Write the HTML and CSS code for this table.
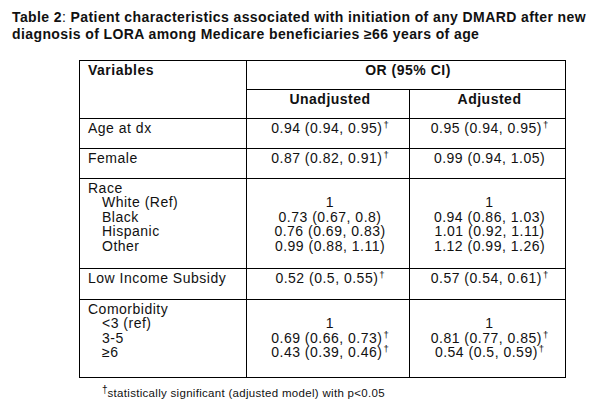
FILE: index.html
```html
<!DOCTYPE html>
<html>
<head>
<meta charset="utf-8">
<link rel="stylesheet" href="styles.css">
</head>
<body>
<div class="page">
  <h1 class="title">Table 2<span class="colon">:</span> Patient characteristics associated with initiation of any DMARD after new diagnosis of LORA among Medicare beneficiaries ≥66 years of age</h1>
  <table class="tbl">
    <colgroup>
      <col class="c1"><col class="c2"><col class="c3">
    </colgroup>
    <tr class="r-h1">
      <th class="left" rowspan="2">Variables</th>
      <th colspan="2">OR (95% CI)</th>
    </tr>
    <tr class="r-h2">
      <th>Unadjusted</th>
      <th>Adjusted</th>
    </tr>
    <tr class="r-1">
      <td class="left">Age at dx</td>
      <td>0.94 (0.94, 0.95)<sup>†</sup></td>
      <td>0.95 (0.94, 0.95)<sup>†</sup></td>
    </tr>
    <tr class="r-1">
      <td class="left">Female</td>
      <td>0.87 (0.82, 0.91)<sup>†</sup></td>
      <td>0.99 (0.94, 1.05)</td>
    </tr>
    <tr class="r-race">
      <td class="left">Race<br><span class="ind">White (Ref)</span><br><span class="ind">Black</span><br><span class="ind">Hispanic</span><br><span class="ind">Other</span></td>
      <td><br>1<br>0.73 (0.67, 0.8)<br>0.76 (0.69, 0.83)<br>0.99 (0.88, 1.11)</td>
      <td><br>1<br>0.94 (0.86, 1.03)<br>1.01 (0.92, 1.11)<br>1.12 (0.99, 1.26)</td>
    </tr>
    <tr class="r-1 r-lis">
      <td class="left">Low Income Subsidy</td>
      <td>0.52 (0.5, 0.55)<sup>†</sup></td>
      <td>0.57 (0.54, 0.61)<sup>†</sup></td>
    </tr>
    <tr class="r-com">
      <td class="left">Comorbidity<br><span class="ind">&lt;3 (ref)</span><br><span class="ind">3-5</span><br><span class="ind">≥6</span></td>
      <td><br>1<br>0.69 (0.66, 0.73)<sup>†</sup><br>0.43 (0.39, 0.46)<sup>†</sup></td>
      <td><br>1<br>0.81 (0.77, 0.85)<sup>†</sup><br>0.54 (0.5, 0.59)<sup>†</sup></td>
    </tr>
  </table>
  <p class="note"><sup>†</sup>statistically significant (adjusted model) with p&lt;0.05</p>
</div>
</body>
</html>
```

FILE: styles.css
```css
html, body {
  margin: 0;
  padding: 0;
  background: #fff;
}
.page {
  font-family: "Liberation Sans", Arial, sans-serif;
  color: #111;
  padding: 9px 0 0 12px;
}
.title {
  margin: 0;
  font-size: 14px;
  font-weight: bold;
  line-height: 17px;
  letter-spacing: 0.4px;
  width: 590px;
}
.colon { font-weight: normal; }
.tbl {
  border-collapse: collapse;
  margin: 17px 0 0 67px;
  font-size: 14px;
  line-height: 14.4px;
  letter-spacing: 0.5px;
}
.c1 { width: 167px; }
.c2 { width: 163px; }
.c3 { width: 156px; }
.tbl th, .tbl td {
  border: 1px solid #000;
  vertical-align: top;
  text-align: center;
  padding: 2px 4px 0 8px;
  font-weight: normal;
}
.tbl th { font-weight: bold; }
.tbl .left { text-align: left; }
.r-h1 { height: 29px; }
.r-h2 { height: 29px; }
.r-1 { height: 30px; }
.r-race { height: 90px; }
.r-lis { height: 31px; }
.r-com { height: 78px; }
.ind { padding-left: 14px; }
sup {
  font-size: 9.5px;
  line-height: 0;
  vertical-align: 5px;
  letter-spacing: 0;
  margin-left: 1px;
}
.note {
  margin: 8px 0 0 90px;
  font-size: 11.5px;
  line-height: 14px;
  letter-spacing: 0.3px;
}
.note sup { font-size: 10px; vertical-align: 4px; margin-left: 0; }
```
